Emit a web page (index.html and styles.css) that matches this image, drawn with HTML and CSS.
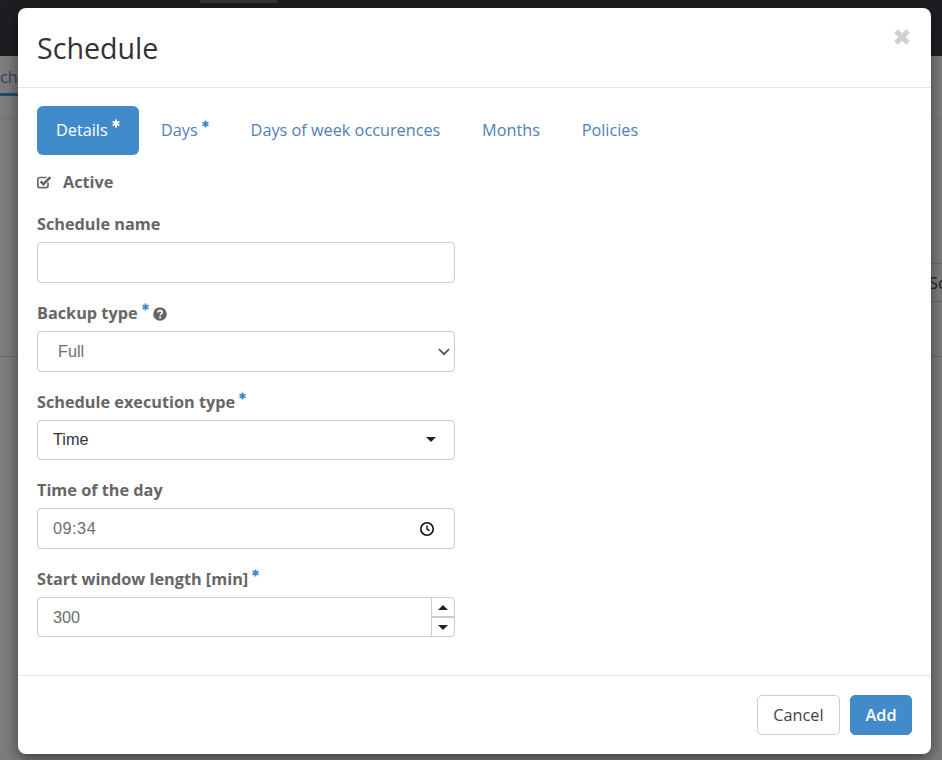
FILE: index.html
```html
<!DOCTYPE html>
<html lang="en">
<head>
  <meta charset="UTF-8" />
  <title>Schedule</title>
  <link rel="stylesheet" href="styles.css">
</head>
<body>

  <svg class="icon-defs" width="0" height="0">
    <symbol id="asterisk" viewBox="0 0 8 9">
      <path d="M4 .5v8M.6 2.5l6.8 4M7.4 2.5l-6.8 4" fill="none" stroke="currentColor" stroke-width="2"/>
    </symbol>
  </svg>

  <div class="page">
    <div class="topbar"><span class="topbar-item"></span></div>
    <div class="subbar"><span class="page-tab">ch</span></div>
    <div class="page-row"><span class="page-cell">So</span></div>
    <div class="page-line"></div>
  </div>

  <div class="modal">
    <header class="modal-header">
      <h1>Schedule</h1>
      <svg class="close" width="18" height="18" viewBox="0 0 18 18">
        <path d="M3 3l12 12M15 3L3 15" fill="none" stroke="#d0d0d0" stroke-width="5"/>
      </svg>
    </header>

    <div class="modal-body">
      <ul class="tabs">
        <li class="tab active">Details <svg class="req"><use href="#asterisk"/></svg></li>
        <li class="tab">Days <svg class="req"><use href="#asterisk"/></svg></li>
        <li class="tab">Days of week occurences</li>
        <li class="tab">Months</li>
        <li class="tab">Policies</li>
      </ul>

      <div class="check-row">
        <svg class="check-icon" width="15" height="14" viewBox="0 0 15 14">
          <path d="M11 7.6v3.2a1.9 1.9 0 0 1-1.9 1.9H2.7A1.9 1.9 0 0 1 .8 10.8V4.4a1.9 1.9 0 0 1 1.9-1.9h6.6" fill="none" stroke="#666" stroke-width="1.7"/>
          <path d="M3.6 6.4l2.8 2.8 7-7" fill="none" stroke="#666" stroke-width="2.6"/>
        </svg>
        <span>Active</span>
      </div>

      <div class="field">
        <label>Schedule name</label>
        <input class="control" type="text">
      </div>

      <div class="field">
        <label>Backup type <svg class="req"><use href="#asterisk"/></svg>
          <svg class="help-icon" width="14" height="14" viewBox="0 0 14 14">
            <circle cx="7" cy="7" r="6.8" fill="#666"/>
            <path d="M4.8 5.5c.1-1.2 1-1.9 2.2-1.9s2.2.8 2.2 1.8c0 1.5-2 1.4-2 2.8" fill="none" stroke="#fff" stroke-width="1.6"/>
            <rect x="6.2" y="9.5" width="1.8" height="1.8" fill="#fff"/>
          </svg>
        </label>
        <div class="select-wrap">
          <select class="control native-select"><option>Full</option></select>
          <svg class="chevron" width="12" height="8" viewBox="0 0 12 8">
            <path d="M1 1.2l5 5 5-5" fill="none" stroke="#555" stroke-width="1.7"/>
          </svg>
        </div>
      </div>

      <div class="field">
        <label>Schedule execution type <svg class="req"><use href="#asterisk"/></svg></label>
        <div class="control fake-select">
          <span>Time</span>
          <span class="caret-down"></span>
        </div>
      </div>

      <div class="field">
        <label>Time of the day</label>
        <div class="control time-input">
          <span>09:34</span>
          <svg width="16" height="16" viewBox="0 0 16 16">
            <circle cx="8" cy="8" r="6.2" fill="none" stroke="#111" stroke-width="1.6"/>
            <path d="M8 4.4V8l2.6 1.7" fill="none" stroke="#111" stroke-width="1.4"/>
          </svg>
        </div>
      </div>

      <div class="field">
        <label>Start window length [min] <svg class="req"><use href="#asterisk"/></svg></label>
        <div class="control number-input">
          <span>300</span>
          <div class="spinner">
            <span class="spin-btn"><span class="caret-up"></span></span>
            <span class="spin-btn"><span class="caret-down small"></span></span>
          </div>
        </div>
      </div>
    </div>

    <footer class="modal-footer">
      <button class="btn">Cancel</button>
      <button class="btn btn-primary">Add</button>
    </footer>
  </div>

</body>
</html>
```

FILE: styles.css
```css
html, body {
  height: 100%;
}

body {
  margin: 0;
  overflow: hidden;
  font-family: 'Open Sans', sans-serif;
  font-size: 16.25px;
  color: #666;
  background-color: #7d7d7d;
}

.icon-defs {
  position: absolute;
}

/* page behind the modal */
.page {
  height: 760px;
  overflow: hidden;
}

.topbar {
  height: 56px;
  background-color: #1d1e22;
  padding-left: 200px;
}

.topbar-item {
  display: block;
  width: 77px;
  height: 3px;
  background-color: #34353a;
}

.subbar {
  height: 62px;
  border-bottom: 1px solid #747474;
}

.page-tab {
  display: block;
  width: 18px;
  height: 37px;
  overflow: hidden;
  line-height: 42px;
  color: #2f4558;
  border-bottom: 3px solid #1d4f68;
}

.page-row {
  height: 37px;
  margin-top: 144px;
  margin-left: 900px;
  border-top: 1px solid #6b6b6b;
  border-bottom: 1px solid #6b6b6b;
  line-height: 38px;
  color: #222;
}

.page-cell {
  display: block;
  margin-left: 29px;
}

.page-line {
  margin-top: 54px;
  border-top: 1px solid #6b6b6b;
}

/* modal */
.modal {
  position: absolute;
  left: 18px;
  top: 8px;
  width: 913px;
  height: 746px;
  display: flex;
  flex-direction: column;
  background-color: white;
  border-radius: 8px;
  box-shadow: 0 5px 15px rgba(0,0,0,0.5);
}

.modal-header {
  height: 80px;
  box-sizing: border-box;
  padding: 0 19px;
  display: flex;
  align-items: center;
  justify-content: space-between;
  border-bottom: 1px solid #e5e5e5;
}

.modal-header h1 {
  margin: 0;
  font-size: 28.6px;
  font-weight: 400;
  color: #333;
}

.close {
  margin: -22px 1px 0 0;
}

.modal-body {
  flex: 1;
  padding: 18px 19px 0;
}

.tabs {
  display: flex;
  margin: 0;
  padding: 0;
  list-style: none;
}

.tab {
  height: 49px;
  box-sizing: border-box;
  padding: 12px 20.75px 0 21px;
  line-height: 24px;
  color: #4f81b8;
  white-space: nowrap;
}

.tab.active {
  margin-right: 1px;
  padding: 12px 19px 0;
  color: white;
  background-color: #428bca;
  border-radius: 6px;
}

.req {
  width: 7px;
  height: 8px;
  vertical-align: 8px;
  color: #428bca;
}

.tab.active .req {
  width: 8px;
  height: 9px;
  color: white;
}

.check-row {
  display: flex;
  align-items: center;
  height: 24px;
  margin-top: 15px;
  margin-bottom: 18px;
  font-weight: 700;
}

.check-icon {
  margin-right: 11px;
}

.field {
  width: 418px;
  margin-bottom: 18px;
}

.field label {
  display: block;
  height: 24px;
  margin-bottom: 6px;
  font-weight: 700;
  line-height: 24px;
  white-space: nowrap;
}

.help-icon {
  vertical-align: -2px;
}

.control {
  display: flex;
  align-items: center;
  width: 100%;
  height: 40.75px;
  box-sizing: border-box;
  margin: 0;
  padding: 0 15px;
  border: 1px solid #ccc;
  border-radius: 4px;
  background-color: white;
  font-family: 'Liberation Sans', sans-serif;
  font-size: 16.25px;
  color: #6e6e6e;
}

.select-wrap {
  position: relative;
}

.native-select {
  appearance: none;
  padding-left: 20px;
}

.chevron {
  position: absolute;
  right: 5px;
  top: 17px;
}

.fake-select {
  justify-content: space-between;
  color: #333;
}

.caret-down {
  width: 0;
  height: 0;
  margin-right: 3px;
  border-left: 5px solid transparent;
  border-right: 5px solid transparent;
  border-top: 5px solid #222;
}

.caret-down.small {
  margin-right: 0;
}

.caret-up {
  width: 0;
  height: 0;
  border-left: 5px solid transparent;
  border-right: 5px solid transparent;
  border-bottom: 5px solid #222;
}

.time-input {
  justify-content: space-between;
  padding-right: 19px;
  letter-spacing: 0.5px;
}

.number-input {
  height: 40px;
  padding-right: 0;
  justify-content: space-between;
}

.spinner {
  display: flex;
  flex-direction: column;
  width: 22px;
  height: 100%;
  border-left: 1px solid #ccc;
}

.spin-btn {
  flex: 1;
  display: flex;
  align-items: center;
  justify-content: center;
}

.spin-btn + .spin-btn {
  border-top: 2px solid #ccc;
}

/* footer */
.modal-footer {
  height: 79px;
  box-sizing: border-box;
  padding: 19px 19px 0;
  display: flex;
  justify-content: flex-end;
  gap: 10px;
  border-top: 1px solid #e5e5e5;
}

.btn {
  height: 40px;
  padding: 0 15.5px;
  border: 1px solid #ccc;
  border-radius: 5px;
  background-color: white;
  font-family: 'Open Sans', sans-serif;
  font-size: 16.25px;
  color: #444;
}

.btn-primary {
  padding: 0 14.5px;
  border-color: #428bca;
  background-color: #428bca;
  color: white;
  font-weight: 600;
}
```
